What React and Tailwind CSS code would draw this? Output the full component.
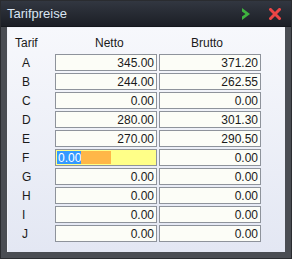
const rows = [
    { t: "A", n: "345.00", b: "371.20" },
    { t: "B", n: "244.00", b: "262.55" },
    { t: "C", n: "0.00", b: "0.00" },
    { t: "D", n: "280.00", b: "301.30" },
    { t: "E", n: "270.00", b: "290.50" },
    { t: "F", n: "0.00", b: "0.00", edit: true },
    { t: "G", n: "0.00", b: "0.00" },
    { t: "H", n: "0.00", b: "0.00" },
    { t: "I", n: "0.00", b: "0.00" },
    { t: "J", n: "0.00", b: "0.00" },
];

function Field({ value }) {
    return (
        <div className="w-[102px] h-[17px] border border-[#8e939b] bg-[#fcfdf7] flex items-center justify-end pr-[2px] text-[12px] text-[#1a1a1a]">
            {value}
        </div>
    );
}

function EditField({ value }) {
    return (
        <div className="w-[102px] h-[17px] border border-[#8e939b] bg-[#ffff88] flex items-stretch text-[12px] p-px">
            <span className="bg-[#3399ff] text-white w-[24px] flex items-center pl-px">{value}</span>
            <span className="bg-[#ffb748] w-[30px]" />
        </div>
    );
}

export default function App() {
    return (
        <div className="w-[292px] h-[259px] bg-[#4a4d53] border border-[#2a2c30] flex flex-col font-['Liberation_Sans',Arial,sans-serif]">
            {/* --- Title bar --- */}
            <div className="h-[26px] bg-gradient-to-b from-[#323741] to-[#1c1f26] flex items-center px-[6px] border-b border-[#15171c]">
                <span className="text-[13px] text-[#d9e5f2] flex-1">Tarifpreise</span>
                <svg width="12" height="14" viewBox="0 0 12 14" className="mr-[17px]">
                    <path d="M2 1 L10 7 L2 13 L2 9.5 L5.5 7 L2 4.5 Z" fill="#3fb33f" />
                </svg>
                <svg width="12" height="12" viewBox="0 0 12 12" className="mr-[4px]">
                    <path d="M1.5 1.5 L10.5 10.5 M10.5 1.5 L1.5 10.5" stroke="#ec4545" strokeWidth="3" strokeLinecap="square" />
                </svg>
            </div>

            {/* --- Content --- */}
            <div className="mx-[6px] h-[225px] bg-gradient-to-b from-[#f7f8fc] to-[#e3e7f3] border-l border-t border-[#f0f2f8] pt-[8px] text-[#1a1a1a]">
                <div className="flex h-[14px] items-center text-[12px] mb-[4px]">
                    <span className="w-[47px] pl-[7px]">Tarif</span>
                    <span className="w-[104px] pl-[40px]">Netto</span>
                    <span className="w-[102px] pl-[32px]">Brutto</span>
                </div>
                <div className="flex flex-col gap-[2px]">
                    {rows.map((r) => (
                        <div key={r.t} className="flex items-center h-[17px]">
                            <span className="w-[47px] pl-[14px] text-[12px]">{r.t}</span>
                            {r.edit ? <EditField value={r.n} /> : <Field value={r.n} />}
                            <span className="w-[2px]" />
                            <Field value={r.b} />
                        </div>
                    ))}
                </div>
            </div>
        </div>
    );
}
